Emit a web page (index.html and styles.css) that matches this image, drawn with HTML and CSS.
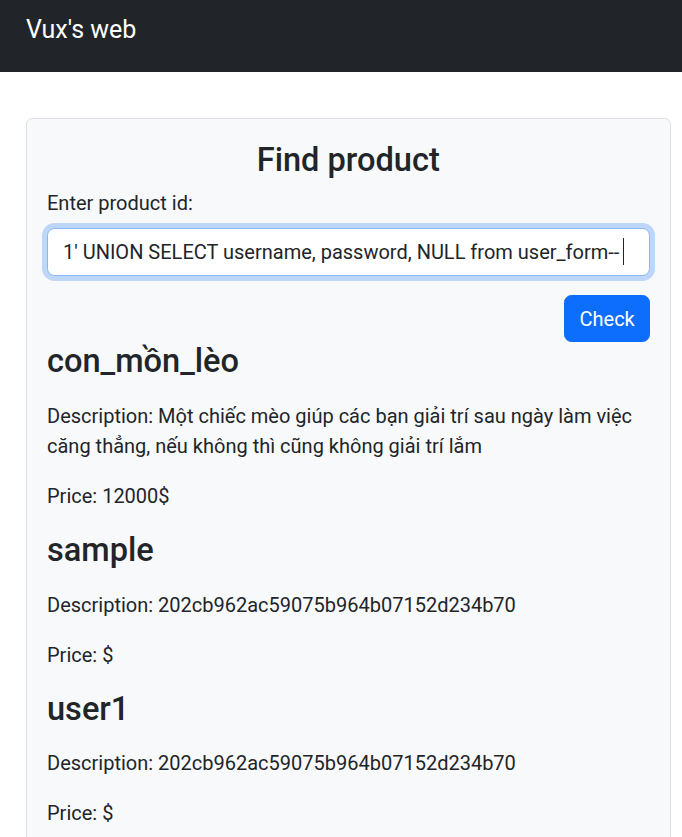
FILE: index.html
```html
<!DOCTYPE html>
<html lang="vi">
<head>
<meta charset="utf-8">
<title>Vux's web</title>
<link rel="stylesheet" href="styles.css">
</head>
<body>
<nav class="navbar">
  <a class="brand" href="#">Vux's web</a>
</nav>
<main class="page">
  <section class="card">
    <h1 class="title">Find product</h1>
    <form class="search">
      <label class="label" for="pid">Enter product id:</label>
      <div class="input" id="pid" role="textbox">1' UNION SELECT username, password, NULL from user_form--<span class="caret"></span></div>
      <div class="actions">
        <button type="button" class="btn">Check</button>
      </div>
    </form>
    <article class="product">
      <h2 class="name">con_mồn_lèo</h2>
      <p class="text">Description: Một chiếc mèo giúp các bạn giải trí sau ngày làm việc<br>căng thẳng, nếu không thì cũng không giải trí lắm</p>
      <p class="text">Price: 12000$</p>
    </article>
    <article class="product">
      <h2 class="name">sample</h2>
      <p class="text">Description: 202cb962ac59075b964b07152d234b70</p>
      <p class="text">Price: $</p>
    </article>
    <article class="product">
      <h2 class="name">user1</h2>
      <p class="text">Description: 202cb962ac59075b964b07152d234b70</p>
      <p class="text">Price: $</p>
    </article>
  </section>
</main>
</body>
</html>
```
FILE: styles.css
```css
* { box-sizing: border-box; }
html, body { margin: 0; padding: 0; }
body {
  font-family: Roboto, "Liberation Sans", sans-serif;
  font-size: 20px;
  line-height: 30px;
  color: #212529;
  background: #fff;
}
.navbar {
  height: 72px;
  background: #212529;
  padding: 11px 0 0 26px;
}
.brand {
  display: inline-block;
  color: #fff;
  font-size: 25px;
  line-height: 37.5px;
  text-decoration: none;
}
.page {
  padding: 45.5px 11px 0 26px;
}
.card {
  background: #f8f9fa;
  border: 1px solid #dee2e6;
  border-radius: 6px;
  padding: 20px 20.5px 0 20px;
  min-height: 760px;
}
.title {
  margin: 2px 0 8.5px;
  font-size: 32.6px;
  font-weight: 500;
  line-height: 1.2;
  text-align: center;
}
.search { margin: 0; }
.label {
  display: block;
  margin-bottom: 10px;
}
.input {
  display: flex;
  align-items: center;
  height: 47.5px;
  padding: 0 15px;
  background: #fff;
  border: 1px solid #86b7fe;
  border-radius: 7.5px;
  box-shadow: 0 0 0 5px rgba(13, 110, 253, 0.25);
  font-size: 20px;
  white-space: nowrap;
}
.caret {
  display: inline-block;
  width: 1px;
  height: 27px;
  margin-left: 4px;
  background: #212529;
}
.actions {
  display: flex;
  justify-content: flex-end;
  margin-top: 19.5px;
}
.btn {
  font-family: inherit;
  font-size: 20px;
  line-height: 30px;
  color: #fff;
  background: #0d6efd;
  border: 1px solid #0d6efd;
  border-radius: 7.5px;
  padding: 7.5px 15px;
  width: 86px;
  cursor: pointer;
}
.name {
  margin: 0 0 19.6px;
  font-size: 32.6px;
  font-weight: 500;
  line-height: 1.2;
}
.text {
  margin: 0 0 20px;
}
```
